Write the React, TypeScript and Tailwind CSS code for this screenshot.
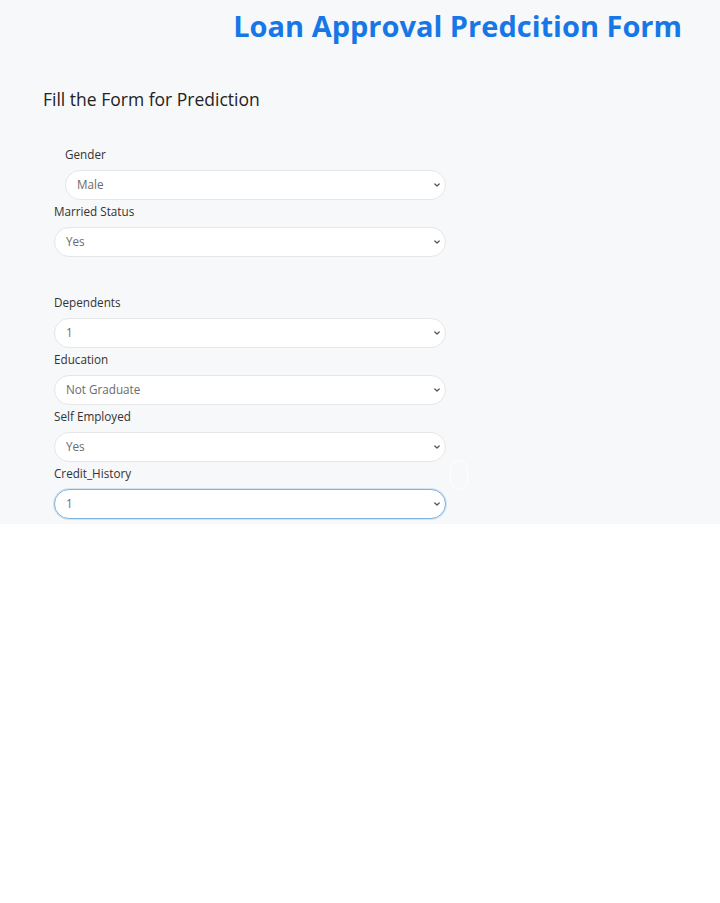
import { useState } from 'react';

const font = { fontFamily: '"Open Sans", "Liberation Sans", sans-serif' };

function Chevron() {
  return (
    <svg className="pointer-events-none absolute right-[5px] top-1/2 -translate-y-1/2" width="8" height="8" viewBox="0 0 8 8">
      <path d="M1.8 3 L4 5 L6.2 3" fill="none" stroke="#555" strokeWidth="1.3" strokeLinecap="round" strokeLinejoin="round" />
    </svg>
  );
}

interface FieldProps {
  label: string;
  options: string[];
  value: string;
  focused?: boolean;
  className?: string;
}

function Field({ label, options, value, focused, className }: FieldProps) {
  const [v, setV] = useState(value);
  return (
    <div className={className}>
      <label className="block text-[11.7px] leading-[15px] text-[#333] mb-[8px]">{label}</label>
      <div className="relative">
        <select
          value={v}
          onChange={(e) => setV(e.target.value)}
          style={font}
          className={`appearance-none w-full h-[30px] rounded-full bg-white pl-[11px] text-[11.7px] text-[#6b6b6b] outline-none ${focused ? 'border border-[#7fb2dd] shadow-[0_0_0_1px_rgba(120,170,220,0.25)]' : 'border border-[#e6e6e6]'}`}
        >
          {options.map((o) => <option key={o}>{o}</option>)}
        </select>
        <Chevron />
      </div>
    </div>
  );
}

export default function App() {
  return (
    <div className="min-h-[903px] bg-white" style={font}>
      <div className="h-[524px] bg-[#f7f8fa] relative">
        <div className="flex justify-end pr-[38px] pt-[6px]">
          <h1 className="text-[29px] leading-[40px] font-bold text-[#1877e6]">Loan Approval Predcition Form</h1>
        </div>
        <div className="pl-[43px] pt-[40px]">
          <h2 className="text-[17.5px] leading-[26px] text-[#222]">Fill the Form for Prediction</h2>
          <div className="w-[403px] pt-[35px]">
            <Field className="pl-[22px]" label="Gender" options={['Male', 'Female']} value="Male" />
            <div className="pl-[11px]">
              <Field className="mt-[4px]" label="Married Status" options={['Yes', 'No']} value="Yes" />
              <Field className="mt-[38px]" label="Dependents" options={['0', '1', '2', '3+']} value="1" />
              <Field className="mt-[4px]" label="Education" options={['Graduate', 'Not Graduate']} value="Not Graduate" />
              <Field className="mt-[4px]" label="Self Employed" options={['Yes', 'No']} value="Yes" />
              <Field className="mt-[4px]" label="Credit_History" options={['0', '1']} value="1" focused />
            </div>
          </div>
        </div>
        <div className="absolute left-[450px] top-[460px] w-[18px] h-[30px] rounded-full border border-white/80" />
      </div>
    </div>
  );
}
